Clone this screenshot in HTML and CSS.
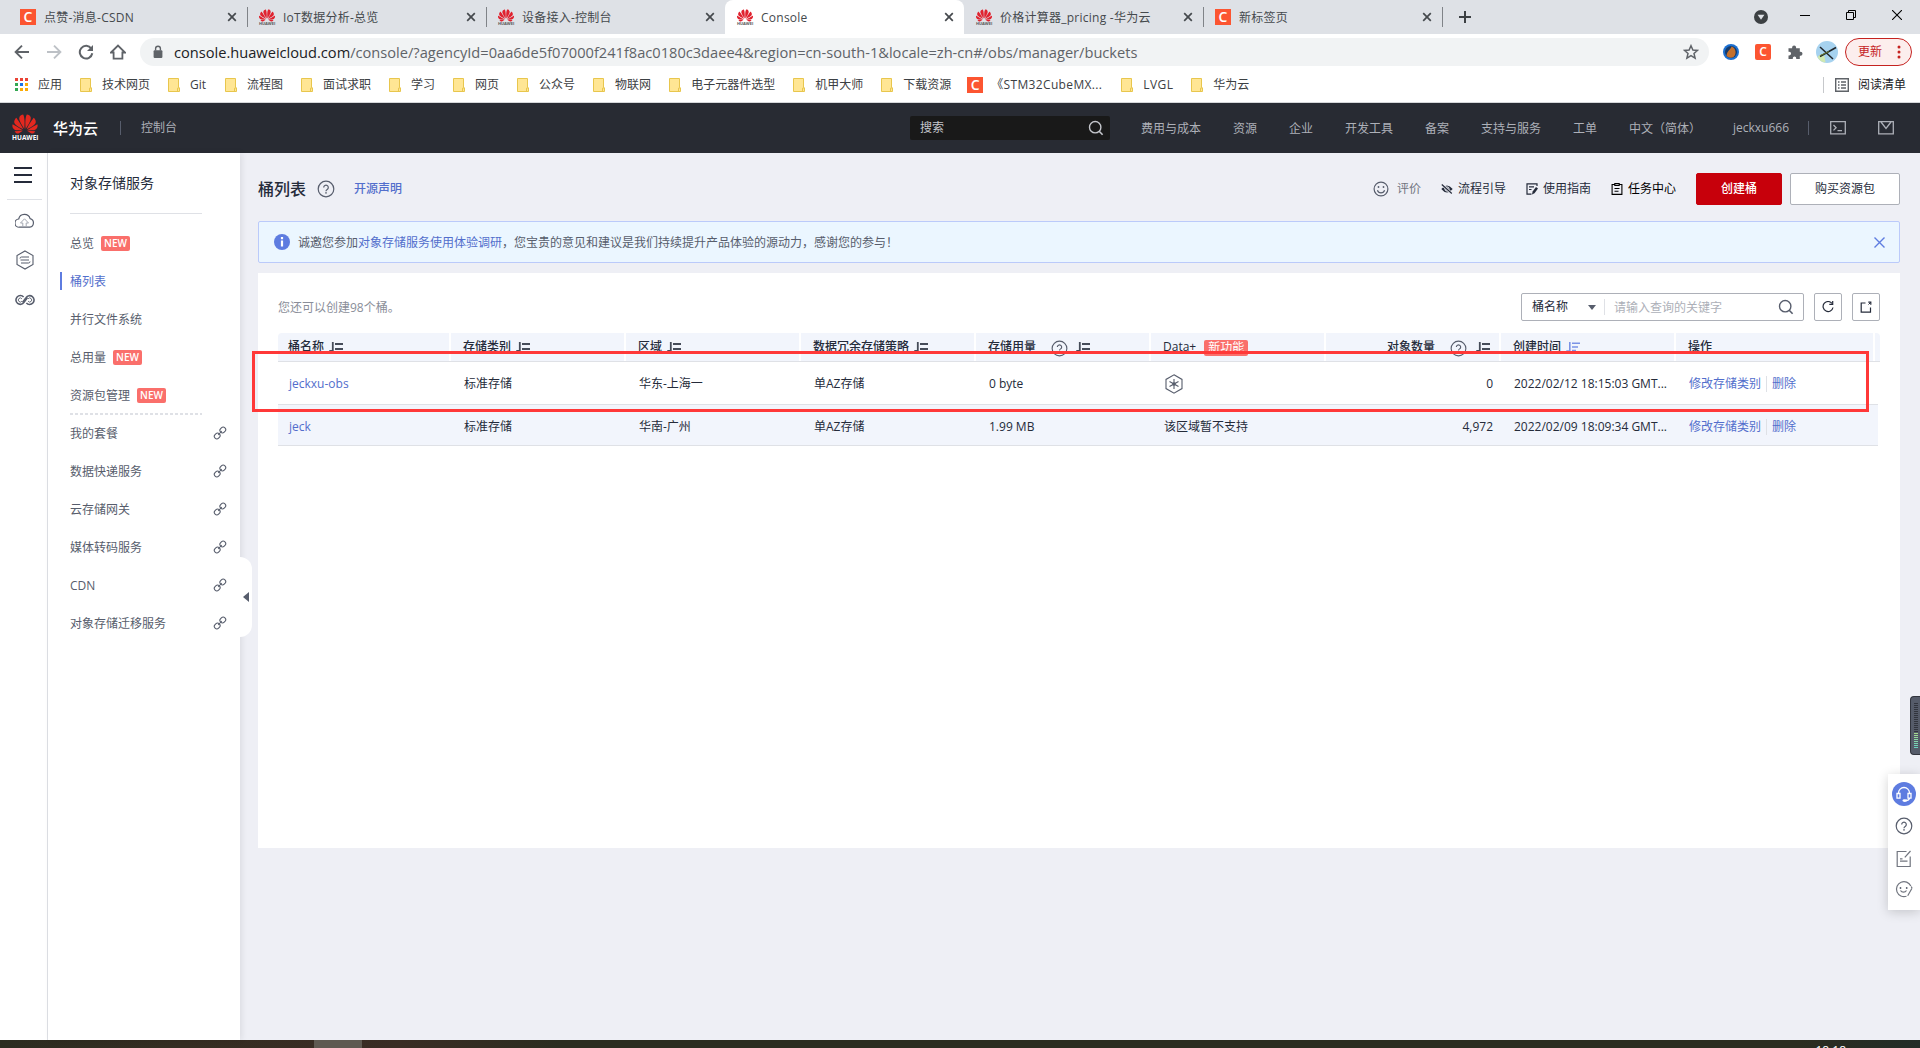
FILE: index.html
```html
<!DOCTYPE html>
<html lang="zh-CN">
<head>
  <meta charset="UTF-8">
  <meta name="viewport" content="width=device-width, initial-scale=1.0">
  <title>Console</title>
  <link rel="stylesheet" href="styles.css">
</head>
<body>
  <!-- 图标 -->
  <svg class="symbols" xmlns="http://www.w3.org/2000/svg">
    <symbol id="huawei" viewBox="0 2.5 24 19">
      <path d="M3.67 6.14S1.82 7.91 1.72 9.78v.35c.08 1.51 1.22 2.4 1.22 2.4 1.83 1.79 6.26 4.04 7.3 4.55 0 0 .06.03.1-.01l.02-.04v-.04C7.52 10.8 3.67 6.14 3.67 6.14zM9.65 18.6c-.02-.08-.1-.08-.1-.08l-7.38.26c.8 1.43 2.15 2.53 3.56 2.2.96-.25 3.16-1.78 3.88-2.3.06-.05.04-.09.04-.09zm.08-.78C6.49 15.63.21 12.28.21 12.28c-.15.46-.2.9-.21 1.3v.07c0 1.07.4 1.82.4 1.82.8 1.69 2.34 2.2 2.34 2.2.7.3 1.4.31 1.4.31.12.02 4.4 0 5.54 0 .05 0 .08-.05.08-.05v-.06c0-.03-.03-.05-.03-.05zM9.06 3.19a3.42 3.42 0 00-2.57 3.15v.41c.03.6.16 1.05.16 1.05.66 2.9 3.86 7.65 4.55 8.65.05.05.1.03.1.03a.1.1 0 00.06-.1c1.06-10.6-1.11-13.42-1.11-13.42-.32.02-1.19.23-1.19.23zm8.3 2.27s-.49-1.8-2.44-2.28c0 0-.57-.14-1.17-.22 0 0-2.18 2.81-1.12 13.43.01.07.06.08.06.08.07.03.1-.03.1-.03.72-1.03 3.9-5.76 4.55-8.64 0 0 .36-1.4.02-2.34zm-2.92 13.07s-.07 0-.09.05c0 0-.01.07.03.1.7.51 2.85 2 3.88 2.3 0 0 .16.05.43.06h.14c.69-.02 1.9-.37 3-2.26l-7.4-.25zm7.83-8.41c.14-2.06-1.94-3.97-1.94-3.98 0 0-3.85 4.66-6.67 10.8 0 0-.03.08.02.13l.04.01h.06c1.06-.53 5.46-2.77 7.28-4.54 0 0 1.15-.93 1.21-2.42zm1.52 2.14s-6.28 3.37-9.52 5.55c0 0-.05.04-.03.11 0 0 .03.06.07.06 1.16 0 5.56 0 5.67-.02 0 0 .57-.02 1.27-.29 0 0 1.56-.5 2.37-2.27 0 0 .73-1.45.17-3.14z"/>
    </symbol>
    <symbol id="close" viewBox="0 0 10 10"><path d="M1.2 1.2l7.6 7.6M8.8 1.2L1.2 8.8" fill="none" stroke="currentColor" stroke-width="1.7"/></symbol>
    <symbol id="folder" viewBox="0 0 12 14"><path d="M.5.5h10v9.3h1v3.7H.5z" fill="#ffe694" stroke="#e8c64d"/><path d="M9.5 13V10.2h1" fill="none" stroke="#e8c64d"/></symbol>
    <symbol id="link" viewBox="0 0 14 14"><g fill="none" stroke="currentColor" stroke-width="1.1"><rect x="7.3" y="1" width="5" height="6" rx="2.5" transform="rotate(45 9.8 4)"/><rect x="1.7" y="7" width="5" height="6" rx="2.5" transform="rotate(45 4.2 10)"/><path d="M5.2 9l3.600-4"/></g></symbol>
    <symbol id="help" viewBox="0 0 18 18"><circle cx="9" cy="9" r="7.8" fill="none" stroke="currentColor" stroke-width="1.2"/><path d="M6.7 7.4a2.3 2.3 0 1 1 3.5 2c-.8.5-1.2.9-1.2 1.8" fill="none" stroke="currentColor" stroke-width="1.2"/><circle cx="9" cy="12.9" r=".8" fill="currentColor"/></symbol>
    <symbol id="sort" viewBox="0 0 14 10"><path d="M3.8 0v9H.3M6 2h8M6 7h8" fill="none" stroke="currentColor" stroke-width="1.8"/></symbol>
    <symbol id="search" viewBox="0 0 16 16"><circle cx="7.2" cy="7.2" r="5.7" fill="none" stroke="currentColor" stroke-width="1.4"/><path d="M11.2 11.2l3.4 3.5" stroke="currentColor" stroke-width="1.6"/></symbol>
  </svg>

  <div class="window">
    <!-- 标签栏 -->
    <div class="tabs">
      <div class="tab"><span class="csdn">C</span><span class="tab-title">点赞-消息-CSDN</span><svg class="tab-close"><use href="#close"/></svg></div>
      <div class="tab"><span class="favicon"><svg><use href="#huawei"/></svg><i>HUAWEI</i></span><span class="tab-title">IoT数据分析-总览</span><svg class="tab-close"><use href="#close"/></svg></div>
      <div class="tab no-line"><span class="favicon"><svg><use href="#huawei"/></svg><i>HUAWEI</i></span><span class="tab-title">设备接入-控制台</span><svg class="tab-close"><use href="#close"/></svg></div>
      <div class="tab active no-line"><span class="favicon"><svg><use href="#huawei"/></svg><i>HUAWEI</i></span><span class="tab-title">Console</span><svg class="tab-close"><use href="#close"/></svg></div>
      <div class="tab"><span class="favicon"><svg><use href="#huawei"/></svg><i>HUAWEI</i></span><span class="tab-title">价格计算器_pricing -华为云</span><svg class="tab-close"><use href="#close"/></svg></div>
      <div class="tab"><span class="csdn">C</span><span class="tab-title">新标签页</span><svg class="tab-close"><use href="#close"/></svg></div>
      <svg class="tab-new" viewBox="0 0 12 12"><path d="M6 0v12M0 6h12" stroke="#3c4043" stroke-width="2"/></svg>
      <div class="win-controls">
        <svg width="14" height="14" viewBox="0 0 14 14"><circle cx="7" cy="7" r="7" fill="#3c4043"/><path d="M3.6 4.8h6.8L7 9.8z" fill="#dee1e6"/></svg>
        <svg width="10" height="10" viewBox="0 0 10 10"><path d="M0 5.5h10" stroke="#000"/></svg>
        <svg width="10" height="10" viewBox="0 0 10 10"><path d="M.5 2.5h7v7h-7zM2.500 2V.5h7v7H8" fill="none" stroke="#000"/></svg>
        <svg width="10" height="10" viewBox="0 0 10 10"><path d="M0 0l10 10M10 0L0 10" stroke="#000" stroke-width="1.1"/></svg>
      </div>
    </div>

    <!-- 地址栏 -->
    <div class="toolbar">
      <svg class="nav-icon" viewBox="0 0 16 16"><path d="M15 8H2M8 1.600L1.600 8 8 14.400" fill="none" stroke="#5f6368" stroke-width="1.9"/></svg>
      <svg class="nav-icon" viewBox="0 0 16 16"><path d="M1 8h13M8 1.600L14.400 8 8 14.400" fill="none" stroke="#bdc1c6" stroke-width="1.9"/></svg>
      <svg class="nav-icon" viewBox="0 0 16 16"><path d="M13.300 4.600A6.300 6.300 0 1 0 14.300 9.300" fill="none" stroke="#5f6368" stroke-width="2"/><path d="M15 1v6H9z" fill="#5f6368"/></svg>
      <svg class="nav-icon" viewBox="0 0 16 16"><path d="M1 8.500L8 1.500l7 7h-2.600V14.600H3.600V8.500z" fill="none" stroke="#5f6368" stroke-width="1.800"/></svg>
      <div class="omnibox">
        <svg class="lock" viewBox="0 0 14 14"><rect x="2.600" y="5.200" width="8.800" height="7.800" rx="1" fill="#5f6368"/><path d="M4.600 5.500V3.600a2.400 2.400 0 0 1 4.800 0v1.900" fill="none" stroke="#5f6368" stroke-width="1.400"/></svg>
        <span class="url"><b>console.huaweicloud.com</b>/console/?agencyId=0aa6de5f07000f241f8ac0180c3daee4&amp;region=cn-south-1&amp;locale=zh-cn#/obs/manager/buckets</span>
        <svg class="star" viewBox="0 0 16 16"><path d="M8 1.700l1.900 4.300 4.600.4-3.500 3.100 1.100 4.600L8 11.700l-4.100 2.400L5 9.500 1.500 6.400 6.100 6z" fill="none" stroke="#5f6368" stroke-width="1.500"/></svg>
      </div>
      <div class="extensions">
        <svg width="16" height="16" viewBox="0 0 16 16"><circle cx="8" cy="8" r="8" fill="#1b6fd0"/><circle cx="8" cy="8" r="6" fill="#153a6b"/><path d="M3.500 11.500C4.500 6 7.500 6 8.500 2.500c4.500 1.500 5.500 7.500 2 10.500-2.500 1.500-6 .5-7-1.500z" fill="#c4702d"/></svg>
        <span class="csdn round">C</span>
        <svg width="16" height="16" viewBox="0 0 16 16"><path d="M1.500 4.200h3.600V3.400a2 2 0 0 1 4 0v.8h3.700v3.500h.7a2 2 0 0 1 0 4h-.7V15H9.200v-.9a1.700 1.700 0 0 0-3.400 0v.9H1.500v-3.600h.8a1.800 1.800 0 0 0 0-3.600h-.8z" fill="#5f6368"/></svg>
        <svg width="22" height="22" viewBox="0 0 22 22"><circle cx="11" cy="11" r="11" fill="#a6d2ef"/><path d="M1.500 16q3-4 7-1l1 6.500Q4 21 1.500 16z" fill="#cfe8b0"/><path d="M4 15.500L20 6.500M4 6l13 12" stroke="#20252a" stroke-width="1.500"/><path d="M4 14.600l9-4" stroke="#6a7a32"/></svg>
      </div>
      <div class="update">更新<svg width="4" height="14" viewBox="0 0 4 14"><g fill="#c5221f"><circle cx="2" cy="2" r="1.500"/><circle cx="2" cy="7" r="1.500"/><circle cx="2" cy="12" r="1.500"/></g></svg></div>
    </div>

    <!-- 书签栏 -->
    <div class="bookmarks">
      <div class="bookmark apps"><svg viewBox="0 0 13 13"><path d="M0 0h3v3H0zM5 0h3v3H5zM10 0h3v3h-3z" fill="#ea4335"/><path d="M0 5h3v3H0zM0 10h3v3H0z" fill="#34a853"/><path d="M5 5h3v3H5z" fill="#1a73e8"/><path d="M10 5h3v3h-3zM5 10h3v3H5zM10 10h3v3h-3z" fill="#fbab05"/></svg>应用</div>
      <div class="bookmark"><svg><use href="#folder"/></svg>技术网页</div>
      <div class="bookmark git"><svg><use href="#folder"/></svg>Git</div>
      <div class="bookmark"><svg><use href="#folder"/></svg>流程图</div>
      <div class="bookmark"><svg><use href="#folder"/></svg>面试求职</div>
      <div class="bookmark"><svg><use href="#folder"/></svg>学习</div>
      <div class="bookmark"><svg><use href="#folder"/></svg>网页</div>
      <div class="bookmark"><svg><use href="#folder"/></svg>公众号</div>
      <div class="bookmark"><svg><use href="#folder"/></svg>物联网</div>
      <div class="bookmark"><svg><use href="#folder"/></svg>电子元器件选型</div>
      <div class="bookmark"><svg><use href="#folder"/></svg>机甲大师</div>
      <div class="bookmark"><svg><use href="#folder"/></svg>下载资源</div>
      <div class="bookmark stm"><span class="csdn">C</span><span class="stm-title">《STM32CubeMX...</span></div>
      <div class="bookmark lvgl"><svg><use href="#folder"/></svg>LVGL</div>
      <div class="bookmark"><svg><use href="#folder"/></svg>华为云</div>
      <div class="reading">
        <svg width="14" height="14" viewBox="0 0 14 14"><path d="M.7.700h12.600v12.600H.7z" fill="none" stroke="#5f6368" stroke-width="1.400"/><path d="M3 4h1.500M3 7h1.500M3 10h1.500M6 4h5M6 7h5M6 10h5" stroke="#5f6368" stroke-width="1.400"/></svg>阅读清单
      </div>
    </div>

    <!-- 控制台顶栏 -->
    <header class="header">
      <div class="logo"><svg><use href="#huawei"/></svg><span>HUAWEI</span></div>
      <span class="brand">华为云</span>
      <span class="console-name">控制台</span>
      <div class="header-search">搜索<svg><use href="#search"/></svg></div>
      <nav class="header-nav">
        <a>费用与成本</a>
        <a>资源</a>
        <a>企业</a>
        <a>开发工具</a>
        <a>备案</a>
        <a>支持与服务</a>
        <a>工单</a>
        <a>中文（简体）</a>
        <a class="user">jeckxu666</a>
      </nav>
      <div class="header-icons">
        <svg width="16" height="14" viewBox="0 0 16 14"><path d="M.7.700h14.600v12.100H.7zM3.500 4l2.600 2.700-2.600 2.700M7.500 9.600H12" fill="none" stroke="#adb0b8" stroke-width="1.300"/></svg>
        <svg width="16" height="14" viewBox="0 0 16 14"><path d="M.7.700h14.600v12.100H.7zM3 1l5 6.500L13 1" fill="none" stroke="#adb0b8" stroke-width="1.300"/></svg>
      </div>
    </header>

    <div class="main">
      <div class="rail">
        <svg class="burger" viewBox="0 0 18 17"><path d="M0 1h18M0 8h18M0 15h18" stroke="#252b3a" stroke-width="2"/></svg>
        <svg class="rail-cloud" viewBox="0 0 20 16"><g fill="none" stroke="#575d6c" stroke-width="1.200"><path d="M5 14.200A4.100 4.100 0 0 1 4.200 6 5.900 5.900 0 0 1 15.600 5.600 4.400 4.400 0 0 1 15.300 14.200z"/><path d="M8.300 13.500V10H6l4-4.200L14 10h-2.300v3.500" stroke="#a4a8b2" stroke-width="1"/></g></svg>
        <svg class="rail-hex" viewBox="0 0 20 20"><g fill="none" stroke="#575d6c" stroke-width="1.100"><path d="M10 1l8 4.500v9L10 19l-8-4.500v-9z"/><path d="M14 7H6.500Q5 7 5 8.500M5.500 10H14M6 13h7.500Q15 13 15 11.500" stroke-width="1"/></g></svg>
        <svg class="rail-inf" viewBox="0 0 20 12"><path d="M12.500 3.600L9 8.400A4.400 4.400 0 1 1 8.600 3M7.500 8.400L11 3.600A4.400 4.400 0 1 1 11.400 9" fill="none" stroke="#575d6c" stroke-width="1.600"/><path d="M6.900 7.200a2 2 0 1 1 0-2.400M13.100 4.800a2 2 0 1 1 0 2.400" fill="none" stroke="#575d6c" stroke-width=".9"/></svg>
      </div>

      <aside class="sidebar">
        <h2>对象存储服务</h2>
        <ul>
          <li>总览 <em class="new">NEW</em></li>
          <li class="current">桶列表</li>
          <li>并行文件系统</li>
          <li>总用量 <em class="new">NEW</em></li>
          <li>资源包管理 <em class="new">NEW</em></li>
        </ul>
        <ul class="links">
          <li>我的套餐<svg><use href="#link"/></svg></li>
          <li>数据快递服务<svg><use href="#link"/></svg></li>
          <li>云存储网关<svg><use href="#link"/></svg></li>
          <li>媒体转码服务<svg><use href="#link"/></svg></li>
          <li>CDN<svg><use href="#link"/></svg></li>
          <li>对象存储迁移服务<svg><use href="#link"/></svg></li>
        </ul>
        <div class="collapse"></div>
      </aside>

      <section class="content">
        <div class="page-head">
          <h1>桶列表</h1>
          <svg class="help"><use href="#help"/></svg>
          <a class="statement">开源声明</a>
          <div class="tools">
            <span class="rate"><svg width="16" height="16" viewBox="0 0 16 16"><g fill="none" stroke="#575d6c" stroke-width="1.200"><circle cx="8" cy="8" r="6.900"/><path d="M4.400 9.200a3.800 3.800 0 0 0 7.200 0"/></g><circle cx="5.500" cy="6" r=".9" fill="#575d6c"/><circle cx="10.500" cy="6" r=".9" fill="#575d6c"/></svg>评价</span>
            <span><svg width="12" height="12" viewBox="0 0 12 12"><path d="M.3 6Q6-1 11.700 6 6 13 .3 6z" fill="#252b3a"/><circle cx="6" cy="6" r="2.100" fill="#252b3a" stroke="#eeeff5"/><path d="M.8 1.500l10 9" stroke="#eeeff5" stroke-width="2.600"/><path d="M.8 1.500l10 9" stroke="#252b3a" stroke-width="1.200"/></svg>流程引导</span>
            <span><svg width="12" height="12" viewBox="0 0 12 12"><path d="M11 3V.8H1v10.400h4.500M3 3.800h5M3 6.500h2.500" fill="none" stroke="#252b3a" stroke-width="1.200"/><path d="M6 11.500l.6-3L10 4l2 1.600-3.500 4.600z" fill="#252b3a"/></svg>使用指南</span>
            <span class="dark"><svg width="12" height="12" viewBox="0 0 12 12"><path d="M3.500 1.500H1.100v9.900h9.800V1.500H8.500M3.500 5.500h5M3.500 8.300h4M3.800.6h4.400v1.900H3.800z" fill="none" stroke="#000" stroke-width="1.100"/></svg>任务中心</span>
          </div>
          <button class="btn primary">创建桶</button>
          <button class="btn">购买资源包</button>
        </div>

        <div class="notice">
          <svg width="16" height="16" viewBox="0 0 16 16"><circle cx="8" cy="8" r="8" fill="#5e7ce0"/><path d="M8 3v2.200M8 6.500v6" stroke="#fff" stroke-width="2.200"/></svg>
          <p>诚邀您参加<a>对象存储服务使用体验调研</a>，您宝贵的意见和建议是我们持续提升产品体验的源动力，感谢您的参与！</p>
          <svg class="notice-close" viewBox="0 0 11 11"><path d="M.5.500l10 10M10.500.500l-10 10" stroke="#5e7ce0" stroke-width="1.400"/></svg>
        </div>

        <div class="panel">
          <div class="panel-bar">
            <span class="quota">您还可以创建98个桶。</span>
            <div class="filter">
              <span class="filter-key">桶名称<i class="caret"></i></span>
              <span class="filter-input">请输入查询的关键字</span>
              <svg><use href="#search"/></svg>
            </div>
            <div class="icon-btn"><svg width="12" height="12" viewBox="0 0 12 12"><path d="M10 2.400A5 5 0 1 0 11 6.500" fill="none" stroke="#252b3a" stroke-width="1.200"/><path d="M10.700 0v3.400H7.300" fill="none" stroke="#252b3a" stroke-width="1.200"/></svg></div>
            <div class="icon-btn"><svg width="12" height="12" viewBox="0 0 12 12"><path d="M5.500 2H1.200v9.200h9.300V6.500M8.300 1.200h2.500v2.500" fill="none" stroke="#252b3a" stroke-width="1.200"/><path d="M10.500 1.500L8.500 3.500" stroke="#252b3a"/></svg></div>
          </div>

          <div class="table">
            <div class="row head">
              <div>桶名称<svg class="sort"><use href="#sort"/></svg></div>
              <div>存储类别<svg class="sort"><use href="#sort"/></svg></div>
              <div>区域<svg class="sort"><use href="#sort"/></svg></div>
              <div>数据冗余存储策略<svg class="sort"><use href="#sort"/></svg></div>
              <div>存储用量<svg class="th-help"><use href="#help"/></svg><svg class="sort"><use href="#sort"/></svg></div>
              <div class="th-data">Data+<em class="feature">新功能</em></div>
              <div class="num">对象数量<svg class="th-help"><use href="#help"/></svg><svg class="sort"><use href="#sort"/></svg></div>
              <div>创建时间<svg class="sort on" viewBox="0 0 14 10"><path d="M3.800 0v9H.3M6 1.200h8M6 5h6M6 8.600h4" fill="none" stroke="currentColor" stroke-width="1.600"/></svg></div>
              <div>操作</div>
              <div></div>
            </div>
            <div class="row">
              <div><a>jeckxu-obs</a></div>
              <div>标准存储</div>
              <div>华东-上海一</div>
              <div>单AZ存储</div>
              <div>0 byte</div>
              <div><svg width="20" height="20" viewBox="0 0 20 20"><g fill="none" stroke="#575d6c" stroke-width="1.100"><path d="M10 .8l8 4.600v9.200l-8 4.600-8-4.600V5.400z"/><path d="M10 5v10M5.500 7.400l9 5.200M14.500 7.400l-9 5.200"/></g><circle cx="10" cy="10" r="1.800" fill="#575d6c"/></svg></div>
              <div class="num">0</div>
              <div class="date">2022/02/12 18:15:03 GMT...</div>
              <div class="ops"><a>修改存储类别</a><a>删除</a></div>
            </div>
            <div class="row alt">
              <div><a>jeck</a></div>
              <div>标准存储</div>
              <div>华南-广州</div>
              <div>单AZ存储</div>
              <div>1.99 MB</div>
              <div>该区域暂不支持</div>
              <div class="num">4,972</div>
              <div class="date">2022/02/09 18:09:34 GMT...</div>
              <div class="ops"><a>修改存储类别</a><a>删除</a></div>
            </div>
            <div class="marker"></div>
          </div>
        </div>
      </section>

      <div class="meter"></div>

      <div class="float-bar">
        <svg width="24" height="24" viewBox="0 0 24 24"><circle cx="12" cy="12" r="12" fill="#5e7ce0"/><g fill="none" stroke="#fff" stroke-width="1.300"><path d="M6.500 11.500V11a5.500 5.500 0 0 1 11 0v.5M5 11.500h3v4.700H5zM16 11.500h3v4.700h-3zM17.500 16.300q-.5 2-3.500 2.200"/></g><ellipse cx="12.800" cy="18.600" rx="2.400" ry="1.300" fill="#fff"/></svg>
        <svg width="18" height="18"><use href="#help"/></svg>
        <svg width="16" height="18" viewBox="0 0 16 18"><path d="M10.500 1.500H1.200v15h13V6.500M14.500 1L8.800 7.400M4 8.800h2.500M4 11.200h7.500" fill="none" stroke="#71757f" stroke-width="1.200"/></svg>
        <svg width="18" height="18" viewBox="0 0 18 18"><path d="M15.800 6A7.500 7.500 0 1 0 11.500 16.200M17 8.200l-4.300 7.500M16.300 6.500L17 8.200" fill="none" stroke="#71757f" stroke-width="1.200"/><path d="M5.500 10.500a3.500 3.500 0 0 0 6 0" fill="none" stroke="#71757f" stroke-width="1.200"/><circle cx="5.500" cy="8" r=".9" fill="#575d6c"/><circle cx="11.700" cy="8" r=".9" fill="#575d6c"/></svg>
      </div>
    </div>

    <!-- 任务栏 -->
    <footer class="taskbar"><span class="task"></span><span class="clock">18:18</span></footer>
  </div>
</body>
</html>
```
FILE: styles.css
```css
* {
  margin: 0;
  padding: 0;
  box-sizing: border-box;
}

body {
  font-family: "Open Sans", "Noto Sans CJK SC", sans-serif;
  font-size: 12px;
  line-height: 16px;
  color: #252b3a;
  background: #eeeff5;
}

svg {
  display: block;
  flex-shrink: 0;
}

i, em {
  font-style: normal;
}

ul {
  list-style: none;
}

.symbols {
  display: none;
}

.window {
  display: flex;
  flex-direction: column;
  height: 1048px;
  overflow: hidden;
  white-space: nowrap;
}

/* 标签栏 */
.tabs {
  display: flex;
  align-items: center;
  height: 34px;
  padding-left: 8px;
  background: #dee1e6;
}

.tab {
  display: flex;
  align-items: center;
  width: 239px;
  height: 34px;
  padding: 0 10px 0 12px;
  color: #45494d;
  position: relative;
}

.tab::after {
  content: "";
  position: absolute;
  right: -1px;
  top: 7px;
  width: 1px;
  height: 20px;
  background: #808388;
}

.tab.no-line::after {
  display: none;
}

.tab.active {
  background: #fff;
  border-radius: 8px 8px 0 0;
}

.tab-title {
  flex: 1;
  margin-left: 8px;
  padding-top: 2px;
  letter-spacing: 0.25px;
}

.tab-close {
  width: 10px;
  height: 10px;
  color: #45494d;
}

.favicon {
  width: 16px;
  height: 16px;
  color: #555;
}

.favicon svg {
  width: 16px;
  height: 13px;
  fill: #e0222f;
}

.favicon i {
  display: block;
  width: 16px;
  font-size: 4px;
  line-height: 3px;
  text-align: center;
  font-weight: 700;
}

.csdn {
  width: 16px;
  height: 16px;
  background: #fc5531;
  color: #fff;
  font-size: 14px;
  font-weight: 600;
  line-height: 16px;
  text-align: center;
}

.csdn.round {
  border-radius: 2px;
  font-size: 12px;
}

.tab-new {
  width: 12px;
  height: 12px;
  margin-left: 17px;
}

.win-controls {
  display: flex;
  align-items: center;
  margin-left: auto;
  padding-right: 18px;
}

.win-controls svg {
  margin: 0 0 5px 36px;
}

.win-controls svg:first-child {
  margin: 0 -4px 0 0;
}

/* 地址栏 */
.toolbar {
  display: flex;
  align-items: center;
  height: 36px;
  padding: 0 8px 0 14px;
  background: #fff;
}

.nav-icon {
  width: 16px;
  height: 16px;
  margin-right: 16px;
}

.omnibox {
  display: flex;
  align-items: center;
  width: 1569px;
  height: 28px;
  margin-left: -2px;
  padding: 0 10px 0 11px;
  border-radius: 14px;
  background: #f1f3f4;
}

.lock {
  width: 14px;
  height: 14px;
}

.url {
  flex: 1;
  margin-left: 9px;
  font-size: 14.63px;
  color: #5f6368;
}

.url b {
  font-weight: 400;
  color: #202124;
}

.star {
  width: 16px;
  height: 16px;
}

.extensions {
  display: flex;
  align-items: center;
  gap: 16px;
  margin-left: 14px;
}

.extensions svg:last-child {
  margin-left: -3px;
}

.update {
  display: flex;
  align-items: center;
  justify-content: space-between;
  width: 67px;
  height: 28px;
  margin-left: auto;
  padding: 0 10px 0 12px;
  border: 1px solid #c5221f;
  border-radius: 14px;
  background: #fceeed;
  color: #c5221f;
}

/* 书签栏 */
.bookmarks {
  display: flex;
  align-items: center;
  height: 33px;
  padding: 0 14px 3px 15px;
  border-bottom: 1px solid #d5d7da;
  background: #fff;
  color: #3c4043;
}

.bookmark {
  display: flex;
  align-items: center;
  margin-right: 18px;
}

.bookmark svg {
  width: 12px;
  height: 14px;
  margin-right: 10px;
}

.bookmark.apps svg {
  width: 13px;
  height: 13px;
}

.bookmark.git {
  width: 39px;
}

.bookmark.stm {
  margin-left: -2px;
}

.stm-title {
  width: 112px;
  margin-left: 8px;
  letter-spacing: 0.35px;
}

.bookmark.lvgl {
  width: 52px;
  letter-spacing: 0.5px;
}

.reading {
  display: flex;
  align-items: center;
  gap: 9px;
  height: 16px;
  margin-left: auto;
  padding-left: 11px;
  border-left: 1px solid #c6c8cb;
  color: #202124;
}

/* 控制台顶栏 */
.header {
  display: flex;
  align-items: center;
  height: 50px;
  padding-left: 12px;
  background: #282b33;
  color: #adb0b8;
}

.logo {
  width: 26px;
  height: 28px;
}

.logo svg {
  width: 26px;
  height: 20px;
  fill: #e3281f;
}

.logo span {
  display: block;
  color: #fff;
  font-size: 6.5px;
  font-weight: 700;
  line-height: 8px;
  text-align: center;
}

.brand {
  width: 67px;
  margin-left: 15px;
  color: #fff;
  font-size: 15px;
  font-weight: 500;
}

.console-name {
  padding-left: 20px;
  border-left: 1px solid #575d6c;
  line-height: 14px;
}

.header-search {
  display: flex;
  align-items: center;
  justify-content: space-between;
  width: 200px;
  height: 24px;
  margin-left: auto;
  padding: 0 6px 0 10px;
  border-radius: 2px;
  background: #191919;
  color: #c4c6cc;
}

.header-search svg {
  width: 16px;
  height: 16px;
}

.header-nav {
  display: flex;
  gap: 32px;
  margin-left: 31px;
  padding-top: 2px;
}

.user {
  width: 55px;
  margin-top: -1px;
}

.header-icons {
  display: flex;
  align-items: center;
  gap: 32px;
  height: 14px;
  margin: 0 26px 0 20px;
  padding-left: 21px;
  border-left: 1px solid #575d6c;
}

/* 主体 */
.main {
  display: flex;
  height: 887px;
  position: relative;
}

.rail {
  display: flex;
  flex-direction: column;
  align-items: center;
  width: 48px;
  border-right: 1px solid #dfe1e6;
  background: #fff;
  padding-left: 2px;
}

.burger {
  width: 18px;
  height: 17px;
  margin: 14px 3px 0 0;
}

/* 上边框是菜单按钮下的分隔线 */
.rail-cloud {
  box-sizing: content-box;
  width: 20px;
  height: 16px;
  margin-top: 15px;
  padding: 13px 7.5px 0;
  border-top: 1px solid #dfe1e6;
}

.rail-hex {
  width: 20px;
  height: 20px;
  margin-top: 21px;
}

.rail-inf {
  width: 20px;
  height: 12px;
  margin-top: 24px;
}

.sidebar {
  width: 192px;
  padding: 20px 12px 0 22px;
  background: #fff;
  box-shadow: 2px 0 6px rgba(0, 0, 0, 0.08);
  color: #575d6c;
  position: relative;
  z-index: 1;
}

.sidebar h2 {
  width: 132px;
  height: 41px;
  margin-bottom: 10px;
  border-bottom: 1px solid #dfe1e6;
  color: #252b3a;
  font-size: 14px;
  font-weight: 400;
  line-height: 20px;
}

.sidebar li {
  display: flex;
  align-items: center;
  height: 38px;
  padding-top: 2px;
}

.sidebar li.current {
  color: #526ecc;
  margin-left: -10px;
}

.sidebar li.current::before {
  content: "";
  width: 2px;
  height: 18px;
  margin: -2px 8px 0 0;
  background: #5e7ce0;
}

.new {
  width: 29px;
  height: 15px;
  margin: -2px 0 0 7px;
  border-radius: 2px;
  background: #fa6f6b;
  color: #fff;
  font-size: 10px;
  font-weight: 600;
  line-height: 15px;
  text-align: center;
}

.links {
  position: relative;
}

.links::before {
  content: "";
  position: absolute;
  left: 0;
  top: -1px;
  width: 132px;
  height: 2px;
  background: repeating-linear-gradient(90deg, #dfe1e6 0 3px, transparent 3px 5px);
}

.links li {
  justify-content: space-between;
}

.links svg {
  width: 14px;
  height: 14px;
  margin: 0 1px 2px 0;
}

.collapse {
  position: absolute;
  left: 192px;
  top: 404px;
  width: 12px;
  height: 80px;
  border-radius: 0 12px 12px 0;
  background: #fff;
}

.collapse::after {
  content: "";
  position: absolute;
  left: 3px;
  top: 35px;
  border: 5px solid transparent;
  border-left: none;
  border-right: 6px solid #575d6c;
}

.content {
  flex: 1;
  padding: 20px 20px 0 18px;
}

.page-head {
  display: flex;
  align-items: center;
  height: 32px;
}

.page-head h1 {
  font-size: 16px;
  font-weight: 500;
}

.help {
  width: 18px;
  height: 18px;
  margin: 0 19px 0 11px;
  color: #575d6c;
}

a {
  color: #526ecc;
}

.header a {
  color: #adb0b8;
}

.statement {
  font-weight: 500;
}

.tools {
  display: flex;
  gap: 20px;
  margin: 0 20px 0 auto;
}

.tools span {
  display: flex;
  align-items: center;
  gap: 5px;
}

.tools .rate {
  gap: 8px;
  color: #71757f;
}

.tools .dark {
  color: #000;
}

.btn {
  width: 110px;
  height: 32px;
  border: 1px solid #adb0b8;
  border-radius: 2px;
  background: #fff;
  color: #252b3a;
  font: inherit;
}

.btn.primary {
  width: 86px;
  margin-right: 8px;
  border-color: #c7000b;
  background: #c7000b;
  color: #fff;
  font-weight: 500;
}

.notice {
  display: flex;
  align-items: center;
  height: 42px;
  margin-top: 16px;
  padding: 0 14px 0 15px;
  border: 1px solid #bbcafa;
  border-radius: 2px;
  background: #ebf6ff;
  color: #575d6c;
}

.notice p {
  flex: 1;
  margin-left: 8px;
  padding-top: 2px;
}

.notice-close {
  width: 11px;
  height: 11px;
}

.panel {
  height: 575px;
  margin-top: 10px;
  padding: 20px;
  background: #fff;
}

.panel-bar {
  display: flex;
  align-items: center;
  height: 28px;
}

.quota {
  padding-top: 2px;
  color: #8a8e99;
}

.filter {
  display: flex;
  align-items: center;
  width: 283px;
  height: 28px;
  margin-left: auto;
  padding: 0 9px 0 10px;
  border: 1px solid #adb0b8;
  border-radius: 2px;
}

.filter-key {
  display: flex;
  align-items: center;
  justify-content: space-between;
  width: 73px;
  padding-right: 8px;
  border-right: 1px solid #dfe1e6;
}

.caret {
  border: 4px solid transparent;
  border-top: 5px solid #575d6c;
  border-bottom: none;
}

.filter-input {
  flex: 1;
  padding: 1px 0 0 9px;
  color: #adb0b8;
}

.filter svg {
  width: 16px;
  height: 16px;
  color: #575d6c;
}

.icon-btn {
  display: flex;
  align-items: center;
  justify-content: center;
  width: 28px;
  height: 28px;
  margin-left: 10px;
  border: 1px solid #adb0b8;
  border-radius: 2px;
}

/* 桶列表 */
.table {
  margin-top: 12px;
  position: relative;
}

.row {
  display: grid;
  grid-template-columns: 173px repeat(7, 175px) 199px 5px;
  height: 43px;
  width: 1600px;
  border-bottom: 1px solid #dfe1e6;
}

.row > div {
  display: flex;
  align-items: center;
  padding: 2px 0 0 13px;
}

.row > div:first-child {
  padding-left: 11px;
}

.row.alt {
  height: 41px;
  background: #f2f5fc;
}

.row.alt > div {
  padding-top: 4px;
}

.row.head {
  width: 1602px;
  height: 29px;
  border-radius: 4px 4px 0 0;
  background: #f2f5fc;
  font-weight: 500;
}

.row.head > div {
  height: 28px;
  padding: 0 0 0 12px;
  border-right: 2px solid #fff;
}

.row.head > div:first-child {
  padding-left: 10px;
}

.row.head > div:last-child {
  border: none;
  padding: 0;
}

.row > .num {
  justify-content: flex-end;
  padding-right: 8px;
}

.row.head > .num {
  padding-right: 9px;
}

.sort {
  width: 14px;
  height: 10px;
  margin-left: 5px;
  color: #464c59;
}

.sort.on {
  color: #7b93e6;
}

.th-help {
  width: 17px;
  height: 17px;
  margin: 3px 3px 0 15px;
  color: #575d6c;
}

.num .sort {
  margin-left: 6px;
}

.feature {
  width: 44px;
  height: 16px;
  margin: 1px 0 0 8px;
  border-radius: 2px;
  background: #fa6f6b;
  color: #fff;
  font-weight: 400;
  text-align: center;
}

.ops a + a {
  margin-left: 5px;
  padding-left: 5px;
  border-left: 1px solid #dfe1e6;
}

/* 红色标注框 */
.marker {
  position: absolute;
  left: -26px;
  top: 18px;
  width: 1617px;
  height: 61px;
  border: 3px solid #ff3838;
}

.meter {
  position: absolute;
  right: 0;
  top: 543px;
  width: 10px;
  height: 59px;
  border: 1px solid #31343d;
  border-right: none;
  border-radius: 4px 0 0 4px;
  background: #555b69;
}

.meter::after {
  content: "";
  position: absolute;
  left: 3px;
  top: 6px;
  width: 4px;
  height: 46px;
  background:
    repeating-linear-gradient(transparent 0 1px, #555b69 1px 2px),
    linear-gradient(#31343d 30px, #a8dc8c 30px, #62d0c4);
}

.float-bar {
  display: flex;
  flex-direction: column;
  align-items: center;
  gap: 12px;
  position: absolute;
  right: 0;
  top: 621px;
  width: 32px;
  height: 136px;
  padding-top: 8px;
  background: #fff;
  box-shadow: 0 2px 12px rgba(0, 0, 0, 0.18);
  color: #575d6c;
}

.float-bar svg:nth-child(2) {
  margin-top: -1px;
}

.float-bar svg:nth-child(3) {
  margin-top: 3px;
}

/* 任务栏 */
.taskbar {
  display: flex;
  justify-content: space-between;
  height: 8px;
  padding: 0 74px 0 314px;
  overflow: hidden;
  background: linear-gradient(90deg, #2b2c20 0, #352d22 180px, #3a2c24 400px, #2b2c20 560px, #2b2c20 1800px, #232c28);
}

.task {
  width: 48px;
  background: #5f5a52;
}

.clock {
  padding-top: 3px;
  color: #fff;
}
```
